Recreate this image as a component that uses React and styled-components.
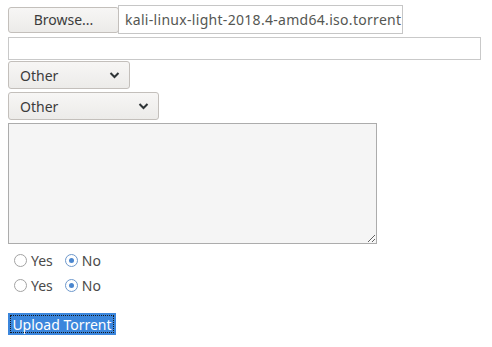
import React, { useState } from "react";
import styled, { createGlobalStyle } from "styled-components";

const GlobalStyle = createGlobalStyle`
  html, body {
    margin: 0;
    background: #ffffff;
    font-family: "Noto Sans", "DejaVu Sans", sans-serif;
    font-size: 13px;
    color: #3c3c3c;
  }
`;

const Form = styled.form`
  display: flex;
  flex-direction: column;
  align-items: flex-start;
  padding: 5px 8px 0 8px;
`;

const FileRow = styled.div`
  display: flex;
  align-items: center;
`;

const BrowseButton = styled.div`
  width: 111px;
  height: 26px;
  box-sizing: border-box;
  border: 1px solid #c3bfbb;
  border-radius: 3px;
  background: linear-gradient(#f7f6f5, #ecebe9);
  display: flex;
  align-items: center;
  justify-content: center;
  font-size: 14px;
  color: #3c3c3c;
  position: relative;
  z-index: 1;
`;

const FileName = styled.div`
  width: 285px;
  height: 29px;
  box-sizing: border-box;
  margin-left: -1px;
  border: 1px solid #c6c6c6;
  display: flex;
  align-items: center;
  padding-left: 6px;
  font-size: 14px;
  letter-spacing: 0.3px;
  color: #555753;
  white-space: nowrap;
`;

const TextInput = styled.input`
  width: 473px;
  height: 23px;
  box-sizing: border-box;
  margin-top: 3px;
  border: 1px solid #c9c9c9;
  padding: 0 4px;
  outline: none;
  font: inherit;
`;

const SelectBox = styled.div`
  width: ${(p) => p.$width}px;
  height: 28px;
  box-sizing: border-box;
  margin-top: ${(p) => p.$top}px;
  border: 1px solid #c3bfbb;
  border-radius: 3px;
  background: linear-gradient(#f7f6f5, #ecebe9);
  display: flex;
  align-items: center;
  justify-content: space-between;
  padding: 0 9px 0 11px;
  font-size: 14px;
  color: #3c3c3c;
`;

const TextArea = styled.textarea`
  width: 369px;
  height: 121px;
  box-sizing: border-box;
  margin-top: 3px;
  border: 1px solid #acacac;
  background: #f5f5f5;
  resize: both;
  outline: none;
  font: inherit;
`;

const RadioRow = styled.div`
  display: flex;
  align-items: center;
  height: 25px;
  margin-top: ${(p) => p.$top}px;
  padding-left: 6px;
`;

const RadioLabel = styled.label`
  display: flex;
  align-items: center;
  margin-right: 12px;
  font-size: 14px;
  color: #4a4a4a;
`;

const RadioDot = styled.span`
  width: 13px;
  height: 13px;
  box-sizing: border-box;
  border-radius: 50%;
  border: 1px solid ${(p) => (p.$on ? "#6d98cc" : "#a3a3a3")};
  background: #ffffff;
  margin-right: 4px;
  display: flex;
  align-items: center;
  justify-content: center;

  &::after {
    content: "";
    width: 5px;
    height: 5px;
    border-radius: 50%;
    background: ${(p) => (p.$on ? "#4a86cf" : "transparent")};
  }
`;

const UploadButton = styled.button`
  margin-top: 15px;
  width: 108px;
  height: 22px;
  box-sizing: border-box;
  border: none;
  padding: 0;
  background: #3b86dc;
  color: #ffffff;
  font: inherit;
  font-size: 14px;
  display: flex;
  align-items: center;
  justify-content: center;
  outline: 1px dotted #1a1a1a;
  outline-offset: -3px;
`;

const Chevron = () => (
  <svg width="11" height="8" viewBox="0 0 11 8">
    <path d="M1.5 2 L5.5 6 L9.5 2" fill="none" stroke="#2e3436" strokeWidth="2" />
  </svg>
);

const YesNo = ({ top }) => {
  const [val, setVal] = useState("no");
  return (
    <RadioRow $top={top}>
      <RadioLabel onClick={() => setVal("yes")}>
        <RadioDot $on={val === "yes"} />
        Yes
      </RadioLabel>
      <RadioLabel onClick={() => setVal("no")}>
        <RadioDot $on={val === "no"} />
        No
      </RadioLabel>
    </RadioRow>
  );
};

const App = () => {
  return (
    <>
      <GlobalStyle />
      <Form onSubmit={(e) => e.preventDefault()}>
        <FileRow>
          <BrowseButton>Browse...</BrowseButton>
          <FileName>kali-linux-light-2018.4-amd64.iso.torrent</FileName>
        </FileRow>
        <TextInput type="text" />
        <SelectBox $width={122} $top={1}>
          Other
          <Chevron />
        </SelectBox>
        <SelectBox $width={151} $top={3}>
          Other
          <Chevron />
        </SelectBox>
        <TextArea />
        <YesNo top={4} />
        <YesNo top={0} />
        <UploadButton type="submit">Upload Torrent</UploadButton>
      </Form>
    </>
  );
};

export default App;
